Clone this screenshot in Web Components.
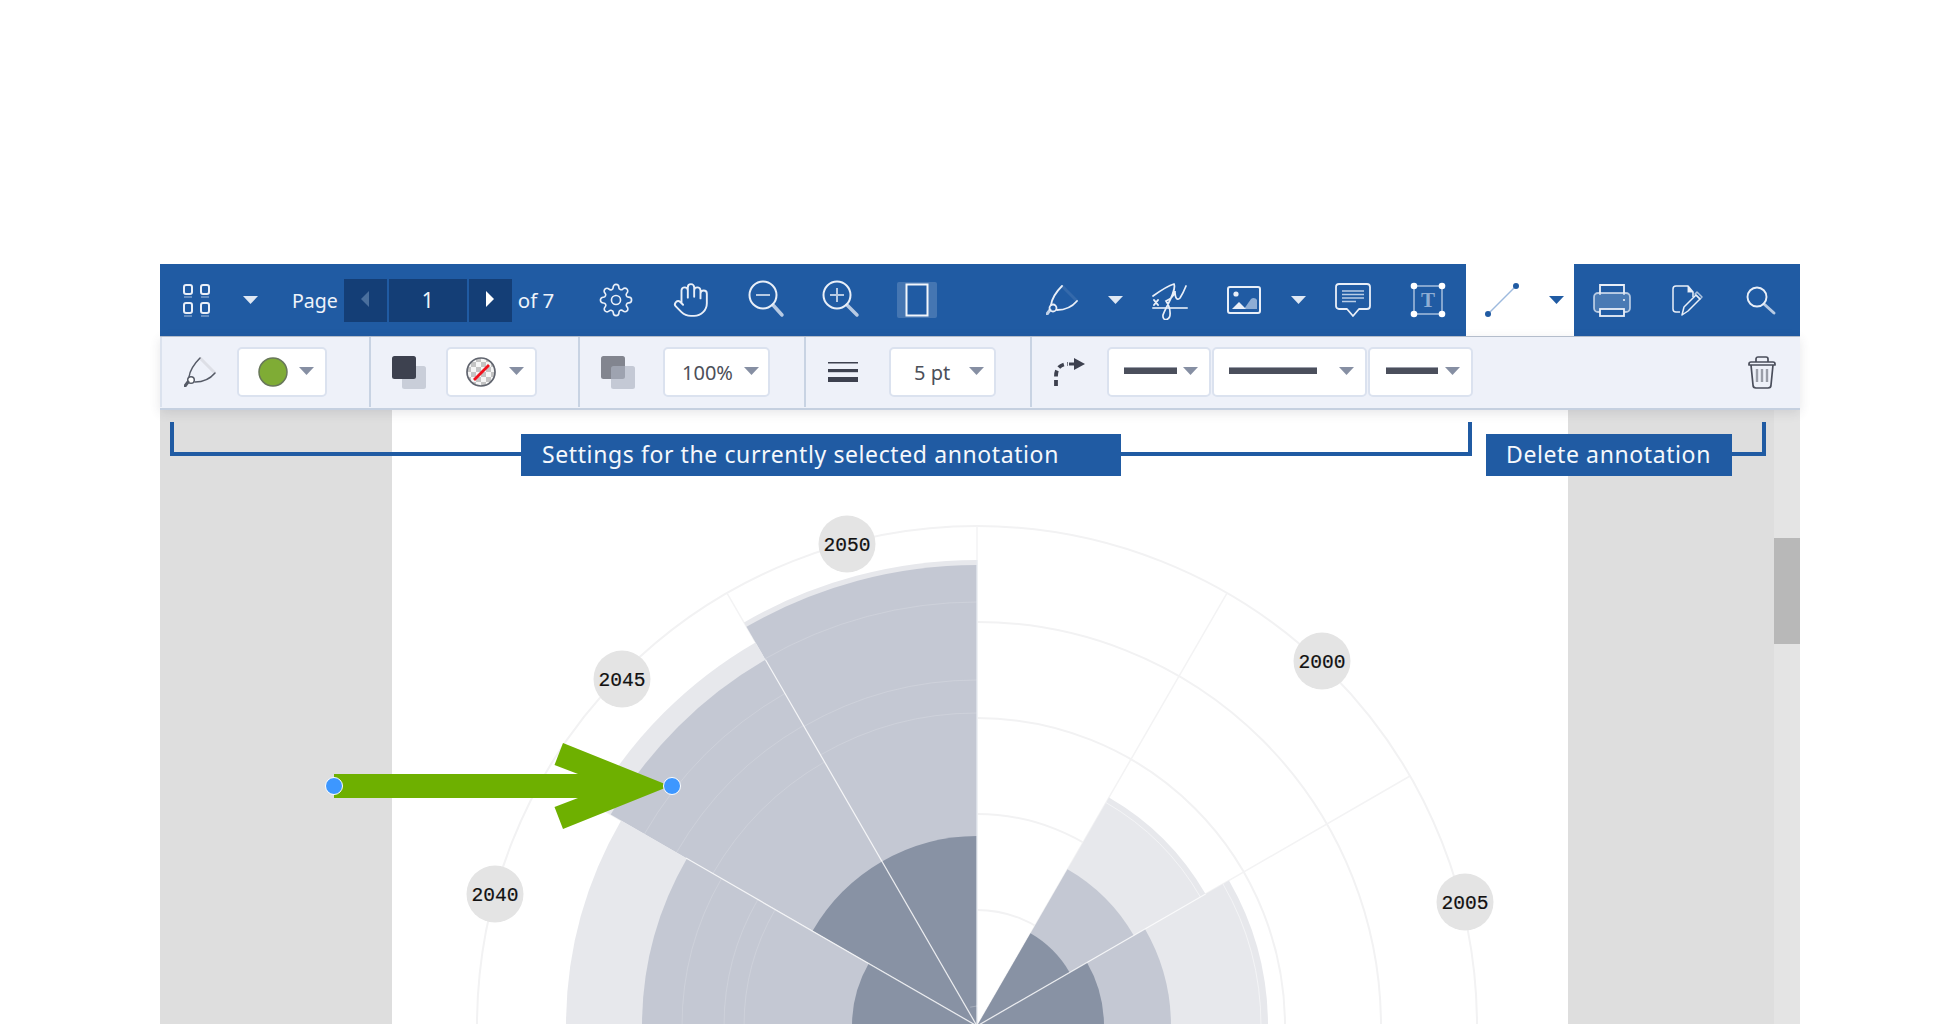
<!DOCTYPE html>
<html>
<head>
<meta charset="utf-8">
<title>Viewer annotation settings</title>
<style>
  html, body { margin: 0; height: 1024px; overflow: hidden; background: #fff; }
  body { font-family: "Noto Sans", sans-serif; }
</style>
</head>
<body>
<pdf-viewer></pdf-viewer>

<script>
const W = '#e9eff8';
const DARK = '#3d414f';

// inline svg for every toolbar icon, sized in real pixels
const ICONS = {
  caret: `<svg width="15" height="8" viewBox="0 0 15 8"><path d="M0 0h15L7.5 8z" fill="#dfe8f4"/></svg>`,
  caretdark: `<svg width="15" height="8" viewBox="0 0 15 8"><path d="M0 0h15L7.5 8z" fill="#868fa3"/></svg>`,
  caretblue: `<svg width="15" height="8" viewBox="0 0 15 8"><path d="M0 0h15L7.5 8z" fill="#205ba3"/></svg>`,
  grid: `<svg width="28" height="34" viewBox="0 0 28 34" fill="none" stroke="${W}" stroke-width="2">
    <rect x="2" y="2" width="8" height="9" rx="2"/><rect x="19" y="2" width="8" height="9" rx="2"/>
    <rect x="2" y="20" width="8" height="10" rx="2"/><rect x="19" y="20" width="8" height="10" rx="2"/>
    <path d="M2 14h8M19 14h8M2 33h8M19 33h8" stroke-opacity=".45" stroke-width="1.5"/></svg>`,
  gear: `<svg width="34" height="34" viewBox="0 0 24 24" fill="none" stroke="${W}" stroke-width="1.15" stroke-linejoin="round"><circle cx="12" cy="12" r="3.2"/><path d="M19.4 15a1.65 1.65 0 0 0 .33 1.82l.06.06a2 2 0 0 1 0 2.83 2 2 0 0 1-2.83 0l-.06-.06a1.65 1.65 0 0 0-1.82-.33 1.65 1.65 0 0 0-1 1.51V21a2 2 0 0 1-2 2 2 2 0 0 1-2-2v-.09A1.65 1.65 0 0 0 9 19.4a1.65 1.65 0 0 0-1.82.33l-.06.06a2 2 0 0 1-2.83 0 2 2 0 0 1 0-2.83l.06-.06a1.65 1.65 0 0 0 .33-1.82 1.65 1.65 0 0 0-1.51-1H3a2 2 0 0 1-2-2 2 2 0 0 1 2-2h.09A1.65 1.65 0 0 0 4.6 9a1.65 1.65 0 0 0-.33-1.82l-.06-.06a2 2 0 0 1 0-2.83 2 2 0 0 1 2.83 0l.06.06a1.65 1.65 0 0 0 1.82.33H9a1.65 1.65 0 0 0 1-1.51V3a2 2 0 0 1 2-2 2 2 0 0 1 2 2v.09a1.65 1.65 0 0 0 1 1.51 1.65 1.65 0 0 0 1.82-.33l.06-.06a2 2 0 0 1 2.83 0 2 2 0 0 1 0 2.83l-.06.06a1.65 1.65 0 0 0-.33 1.82V9a1.65 1.65 0 0 0 1.51 1H21a2 2 0 0 1 2 2 2 2 0 0 1-2 2h-.09a1.65 1.65 0 0 0-1.51 1z"/></svg>`,
  hand: `<svg width="38" height="38" viewBox="0 0 24 24" fill="none" stroke="${W}" stroke-width="1.2" stroke-linecap="round" stroke-linejoin="round"><path d="M18 11V6a2 2 0 0 0-2-2 2 2 0 0 0-2 2M14 10V4a2 2 0 0 0-2-2 2 2 0 0 0-2 2v2M10 10.5V6a2 2 0 0 0-2-2 2 2 0 0 0-2 2v8M18 8a2 2 0 1 1 4 0v6a8 8 0 0 1-8 8h-2c-2.800 0-4.500-.86-5.990-2.340l-3.600-3.600a2 2 0 0 1 2.830-2.820L7 15"/></svg>`,
  zoomout: `<svg width="40" height="40" viewBox="0 0 40 40" fill="none" stroke="${W}"><circle cx="17" cy="15" r="13.500" stroke-width="2"/><path d="M10 15h14" stroke-width="2" stroke-opacity=".75"/><path d="M27 25l9 10" stroke-width="3.500" stroke-linecap="round" stroke-opacity=".75"/></svg>`,
  zoomin: `<svg width="40" height="40" viewBox="0 0 40 40" fill="none" stroke="${W}"><circle cx="17" cy="15" r="13.500" stroke-width="2"/><path d="M10 15h14M17 8v14" stroke-width="2" stroke-opacity=".75"/><path d="M27 25l10 10" stroke-width="3.500" stroke-linecap="round" stroke-opacity=".75"/></svg>`,
  fit: `<svg width="40" height="36" viewBox="0 0 40 36"><rect width="40" height="36" rx="2" fill="#fff" fill-opacity=".17"/><rect x="9.500" y="2.500" width="21" height="31" fill="#205ba3" stroke="#f2f6fb" stroke-width="2"/></svg>`,
  ink: `<svg width="32" height="30" viewBox="0 0 32 30" fill="none"><path d="M16 1L31 16" stroke="#fff" stroke-opacity=".09" stroke-width="3"/><path d="M16 1C11 6 6 13 5 20M11 25C18 25 26 22 31 16" stroke="${W}" stroke-width="1.800" stroke-linecap="round"/><circle cx="7" cy="23" r="3.500" stroke="${W}" stroke-width="1.800"/><path d="M4 25l-3 4" stroke="${W}" stroke-width="3" stroke-linecap="round" stroke-opacity=".8"/></svg>`,
  inkdark: `<svg width="32" height="30" viewBox="0 0 32 30" fill="none"><path d="M16 1L31 16" stroke="#dddfe6" stroke-width="3"/><path d="M16 1C11 6 6 13 5 20M11 25C18 25 26 22 31 16" stroke="#555a66" stroke-width="1.500" stroke-linecap="round"/><circle cx="7" cy="23" r="3.300" fill="#fff" stroke="#555a66" stroke-width="1.500"/><path d="M4 25l-3 4" stroke="#555a66" stroke-width="3" stroke-linecap="round"/></svg>`,
  sign: `<svg width="36" height="40" viewBox="0 0 36 40" fill="none" stroke="${W}" stroke-linecap="round"><g transform="translate(1 3)"><path d="M0 13C7 8 14 3 21 1 24 8 12 25 10 32 9 39 18 38 17 29 17 24 15 21 13 18 17 16 21 14 22 8 22 15 24 18 27 15 29 12 31 8 33 3" stroke-width="1.700"/><path d="M0 25H34" stroke-width="2" stroke-opacity=".8"/><path d="M1 17l4 5M5 17l-4 5" stroke-width="2"/></g></svg>`,
  image: `<svg width="34" height="28" viewBox="0 0 34 28"><rect x="1" y="1" width="32" height="26" rx="2" fill="none" stroke="${W}" stroke-width="2"/><circle cx="9" cy="8" r="2.600" fill="${W}"/><path d="M17 23l7-10c2-2 5-1 6 1v9z" fill="#8eadd4"/><path d="M5 23l7-7 7 7z" fill="${W}"/></svg>`,
  comment: `<svg width="38" height="34" viewBox="0 0 38 34" fill="none"><path d="M5 1h28a3 3 0 0 1 3 3v19a3 3 0 0 1-3 3H25l-6 7-6-7H5a3 3 0 0 1-3-3V4a3 3 0 0 1 3-3z" stroke="${W}" stroke-width="1.800" stroke-linejoin="round"/><path d="M8 8h22M8 11.500h22M8 15h22M8 18.500h14" stroke="#b9cde6" stroke-width="1.300"/></svg>`,
  tbox: `<svg width="36" height="36" viewBox="0 0 36 36"><rect x="4" y="4" width="28" height="28" fill="none" stroke="#a5bedd" stroke-width="1.500"/><circle cx="4" cy="4" r="3.300" fill="#fff"/><circle cx="32" cy="4" r="3.300" fill="#fff"/><circle cx="4" cy="32" r="3.300" fill="#fff"/><circle cx="32" cy="32" r="3.300" fill="#fff"/><text x="18" y="25" text-anchor="middle" font-family="Liberation Serif, serif" font-weight="700" font-size="21" fill="#8eadd4">T</text></svg>`,
  line: `<svg width="36" height="36" viewBox="0 0 36 36"><path d="M4 32L32 4" stroke="#9dbade" stroke-width="1.500"/><circle cx="4" cy="32" r="3" fill="#205ba3"/><circle cx="32" cy="4" r="3" fill="#205ba3"/></svg>`,
  print: `<svg width="38" height="34" viewBox="0 0 38 34" fill="none" stroke="${W}" stroke-width="1.800"><path d="M7 12V2h24v10" /><rect x="1" y="10" width="36" height="19" rx="4" fill="#7d9fca" fill-opacity=".45" stroke-opacity=".7"/><rect x="7" y="26" width="24" height="7" fill="#205ba3"/><circle cx="31" cy="17" r="1.100" fill="${W}" stroke="none"/></svg>`,
  docedit: `<svg width="34" height="34" viewBox="0 0 34 34" fill="none" stroke="${W}" stroke-width="1.500" stroke-linejoin="round"><path d="M10 29H6a3 3 0 0 1-3-3V6a3 3 0 0 1 3-3h12l5 6v5"/><path d="M18 3v6h5" fill="${W}" stroke-opacity=".6"/><path d="M12 32l2-8 12-12 4 4-12 12z"/><path d="M27 9l5 5-2 2-5-5z" stroke-opacity=".7"/></svg>`,
  search: `<svg width="36" height="36" viewBox="0 0 36 36" fill="none" stroke="${W}"><circle cx="13" cy="15" r="9.500" stroke-width="1.900"/><path d="M20 22l10 9" stroke-width="3" stroke-linecap="round" stroke-opacity=".75"/></svg>`,
  paired: `<svg width="34" height="33" viewBox="0 0 34 33"><rect x="10" y="10" width="24" height="23" rx="2.500" fill="#c9ced9"/><rect width="24" height="23" rx="2.500" fill="${DARK}"/></svg>`,
  pairedfade: `<svg width="34" height="33" viewBox="0 0 34 33"><rect width="24" height="23" rx="2.500" fill="#82858f"/><rect x="10" y="10" width="24" height="23" rx="2.500" fill="#aeb3c1" fill-opacity=".65"/></svg>`,
  widths: `<svg width="30" height="20" viewBox="0 0 30 20" fill="${DARK}"><rect y="0" width="30" height="1.500"/><rect y="7" width="30" height="3.200"/><rect y="15" width="30" height="5"/></svg>`,
  connector: `<svg width="32" height="32" viewBox="0 0 32 32" fill="none" stroke="${DARK}" stroke-width="3.800"><path d="M3 30V20C3 12 8 8 15 8" stroke-dasharray="6 3.500"/><path d="M16 8h12" stroke-width="3"/><path d="M21 2l11 6-11 6z" fill="${DARK}" stroke="none"/></svg>`,
  trash: `<svg width="28" height="33" viewBox="0 0 28 33" fill="none" stroke="#4a4e5b" stroke-width="1.700" stroke-linejoin="round"><path d="M8 6V3a2 2 0 0 1 2-2h8a2 2 0 0 1 2 2v3"/><path d="M1 8a2 2 0 0 1 2-2h22a2 2 0 0 1 2 2v1H1z"/><path d="M3 9l2 20a3 3 0 0 0 3 3h12a3 3 0 0 0 3-3l2-20"/><path d="M9 13v13M14 13v13M19 13v13" stroke="#9a9ea8" stroke-width="2.400"/></svg>`,
  greendot: `<svg width="30" height="30" viewBox="0 0 30 30"><circle cx="15" cy="15" r="14" fill="#7fac35" stroke="#68775a" stroke-width="1.500"/></svg>`,
  nocolor: `<svg width="30" height="30" viewBox="0 0 30 30"><defs><pattern id="chk" width="10" height="10" patternUnits="userSpaceOnUse"><rect width="10" height="10" fill="#f6f6f6"/><rect width="5" height="5" fill="#c4c4c4"/><rect x="5" y="5" width="5" height="5" fill="#c4c4c4"/></pattern></defs><circle cx="15" cy="15" r="14" fill="url(#chk)" stroke="#60646e" stroke-width="1.700"/><path d="M8 23L23 8" stroke="#f0101c" stroke-width="2.800"/></svg>`
};

class ToolIcon extends HTMLElement {
  constructor() {
    super();
    this.attachShadow({ mode: 'open' });
    this.shadowRoot.innerHTML = `
      <style>
        :host { display: flex; flex: none; align-items: center; justify-content: center; width: var(--w, auto); height: 100%; }
        svg { display: block; }
      </style>` + ICONS[this.getAttribute('name')];
  }
}

const pagerTemplate = document.createElement('template');
pagerTemplate.innerHTML = `
  <style>
    :host { display: flex; flex: none; align-items: center; height: 100%; width: 311px; padding-left: 24px; box-sizing: border-box; color: #eef3fa; font-size: 19.500px; }
    .box { display: flex; height: 43px; margin: 0 6px 0 6px; gap: 2px; }
    .box div { display: flex; align-items: center; justify-content: center; background: #143e76; }
    .arrow { width: 43px; }
    .num { width: 78px; font-size: 21px; }
    .total { font-size: 20.500px; }
    svg { display: block; margin-top: -2px; }
  </style>
  <span>Page</span>
  <div class="box">
    <div class="arrow"><svg width="8" height="16"><path d="M8 0v16L0 8z" fill="#4a6f9d"/></svg></div>
    <div class="num">1</div>
    <div class="arrow"><svg width="8" height="16"><path d="M0 0v16l8-8z" fill="#fff"/></svg></div>
  </div>
  <span class="total">of 7</span>`;

class PagerBox extends HTMLElement {
  constructor() {
    super();
    this.attachShadow({ mode: 'open' });
    this.shadowRoot.appendChild(pagerTemplate.content.cloneNode(true));
  }
}

const mainbarTemplate = document.createElement('template');
mainbarTemplate.innerHTML = `
  <style>
    :host { display: flex; height: 72px; background: #205ba3; }
    .gap { flex: 1; }
    .sel { display: flex; height: 100%; background: #fff; }
  </style>
  <tool-icon name="grid" style="--w:72px"></tool-icon>
  <tool-icon name="caret" style="--w:36px"></tool-icon>
  <pager-box></pager-box>
  <tool-icon name="gear" style="--w:74px"></tool-icon>
  <tool-icon name="hand" style="--w:76px"></tool-icon>
  <tool-icon name="zoomout" style="--w:73px"></tool-icon>
  <tool-icon name="zoomin" style="--w:76px"></tool-icon>
  <tool-icon name="fit" style="--w:78px"></tool-icon>
  <div class="gap"></div>
  <tool-icon name="ink" style="--w:72px"></tool-icon>
  <tool-icon name="caret" style="--w:34px"></tool-icon>
  <tool-icon name="sign" style="--w:76px"></tool-icon>
  <tool-icon name="image" style="--w:72px"></tool-icon>
  <tool-icon name="caret" style="--w:36px"></tool-icon>
  <tool-icon name="comment" style="--w:74px"></tool-icon>
  <tool-icon name="tbox" style="--w:76px"></tool-icon>
  <div class="sel">
    <tool-icon name="line" style="--w:72px"></tool-icon>
    <tool-icon name="caretblue" style="--w:36px"></tool-icon>
  </div>
  <tool-icon name="print" style="--w:76px"></tool-icon>
  <tool-icon name="docedit" style="--w:74px"></tool-icon>
  <tool-icon name="search" style="--w:76px"></tool-icon>`;

class MainBar extends HTMLElement {
  constructor() {
    super();
    this.attachShadow({ mode: 'open' });
    this.shadowRoot.appendChild(mainbarTemplate.content.cloneNode(true));
  }
}

const selectTemplate = document.createElement('template');
selectTemplate.innerHTML = `
  <style>
    :host { display: flex; flex: none; align-items: center; box-sizing: border-box; height: 50px; width: var(--sw); padding: 0 var(--spr, 11px) 0 var(--spl, 14px);
      background: #fff; border: 2px solid #dbe2ef; border-radius: 5px; }
    tool-icon { margin-left: auto; margin-top: -2px; }
  </style>
  <slot></slot>
  <tool-icon name="caretdark"></tool-icon>`;

class DropSelect extends HTMLElement {
  constructor() {
    super();
    this.attachShadow({ mode: 'open' });
    this.shadowRoot.appendChild(selectTemplate.content.cloneNode(true));
  }
}

const groupTemplate = document.createElement('template');
groupTemplate.innerHTML = `
  <style>
    :host { display: flex; flex: none; align-items: center; box-sizing: border-box; height: 100%; width: var(--gw); padding-left: var(--gpl); gap: var(--gap, 22px); border-right: 2px solid #c8d3e3; }
    :host([last]) { flex: 1; border-right: none; gap: 0; padding-right: 24px; }
  </style>
  <slot></slot>`;

class AnnotGroup extends HTMLElement {
  constructor() {
    super();
    this.attachShadow({ mode: 'open' });
    this.shadowRoot.appendChild(groupTemplate.content.cloneNode(true));
  }
}

const annotbarTemplate = document.createElement('template');
annotbarTemplate.innerHTML = `
  <style>
    :host { display: flex; position: relative; z-index: 2; box-sizing: border-box; height: 74px; padding-bottom: 1px; margin-bottom: -1px; background: #eef1f9; border-bottom: 2px solid #c5d0e0; border-top: 1px solid #b4bdcb; box-shadow: 0 3px 10px rgba(60, 60, 70, .12); color: #4c4f59; font-size: 20px; }
    .dash { display: block; flex: none; height: 6px; margin-top: -3px; background: #4b4f5c; box-shadow: 0 -1px 0 #9a9eaa; }
    .trash { margin-left: auto; }
  </style>
  <annot-group style="--gw:211px;--gpl:22px;--gap:21px;border-left:2px solid #dbe2ee">
    <tool-icon name="inkdark"></tool-icon>
    <drop-select style="--sw:90px;--spl:18.500px"><tool-icon name="greendot"></tool-icon></drop-select>
  </annot-group>
  <annot-group style="--gw:209px;--gpl:21px;--gap:20px">
    <tool-icon name="paired"></tool-icon>
    <drop-select style="--sw:91px;--spl:18px"><tool-icon name="nocolor"></tool-icon></drop-select>
  </annot-group>
  <annot-group style="--gw:226px;--gpl:21px;--gap:28px">
    <tool-icon name="pairedfade"></tool-icon>
    <drop-select style="--sw:107px;--spl:17px;--spr:9px"><span>100%</span></drop-select>
  </annot-group>
  <annot-group style="--gw:226px;--gpl:22px;--gap:31px">
    <tool-icon name="widths"></tool-icon>
    <drop-select style="--sw:107px;--spl:23px;--spr:10px"><span>5 pt</span></drop-select>
  </annot-group>
  <annot-group last style="--gpl:21px">
    <tool-icon name="connector" style="margin-right:22px"></tool-icon>
    <drop-select style="--sw:104px;--spl:15px;margin-right:1px"><span class="dash" style="width:53px"></span></drop-select>
    <drop-select style="--sw:155px;--spl:15px;margin-right:1px"><span class="dash" style="width:88px"></span></drop-select>
    <drop-select style="--sw:105px;--spl:16px"><span class="dash" style="width:52px"></span></drop-select>
    <tool-icon class="trash" name="trash"></tool-icon>
  </annot-group>`;

class AnnotBar extends HTMLElement {
  constructor() {
    super();
    this.attachShadow({ mode: 'open' });
    this.shadowRoot.appendChild(annotbarTemplate.content.cloneNode(true));
  }
}

// the polar chart on the page, drawn in screen coordinates and shifted in the svg
class PolarChart extends HTMLElement {
  constructor() {
    super();
    this.attachShadow({ mode: 'open' });
    const cx = 977, cy = 1026;
    const pt = (r, a) => {
      const t = a * Math.PI / 180;
      return (cx + r * Math.sin(t)).toFixed(1) + ' ' + (cy - r * Math.cos(t)).toFixed(1);
    };
    const wedge = (a, b, r, fill) => `<path d="M${cx} ${cy}L${pt(r, a)}A${r} ${r} 0 0 1 ${pt(r, b)}Z" fill="${fill}"/>`;
    const arc = (a, b, r, st) => `<path d="M${pt(r, a)}A${r} ${r} 0 0 1 ${pt(r, b)}" fill="none" stroke="${st}"/>`;

    let out = '';
    [116, 212, 308, 404, 500].forEach(r => {
      out += `<circle cx="${cx}" cy="${cy}" r="${r}" fill="none" stroke="#f2f2f3" stroke-width="2"/>`;
    });
    [0, 30, 60, 330, 300].forEach(a => {
      out += `<path d="M${cx} ${cy}L${pt(500, a)}" stroke="#f3f3f4" stroke-width="1.500"/>`;
    });

    const sectors = [
      { a: 30, b: 60, r: [264, 181, 107], thin: [], lightThin: [258] },
      { a: 60, b: 90, r: [291, 194, 127], thin: [], lightThin: [284] },
      { a: 330, b: 360, r: [466, 461, 190], thin: [424, 346, 313] },
      { a: 300, b: 330, r: [443, 423, 190], thin: [384, 347, 305] },
      { a: 270, b: 300, r: [411, 335, 125], thin: [295, 253, 233] }
    ];
    sectors.forEach(s => {
      out += wedge(s.a, s.b, s.r[0], '#e7e8ec');
      out += wedge(s.a, s.b, s.r[1], '#c4c8d3');
      s.thin.forEach(r => { out += arc(s.a, s.b, r, 'rgba(255,255,255,.16)'); });
      (s.lightThin || []).forEach(r => { out += arc(s.a, s.b, r, 'rgba(255,255,255,.5)'); });
      out += wedge(s.a, s.b, s.r[2], '#8892a4');
    });
    // white seams between the sectors that touch
    out += `<path d="M${cx} ${cy}L${pt(423, 330)}M${cx} ${cy}L${pt(336, 300)}M${cx} ${cy}L${pt(264, 60)}" stroke="#fff" stroke-opacity=".75" stroke-width="1.300"/>`;
    out += `<path d="M${cx} ${cy}V560" stroke="#e9ecf2" stroke-width="1.300"/>`;
    out += arc(340, 380, 20, 'rgba(255,255,255,.25)');

    const labels = [[847, 545, '2050'], [622, 680, '2045'], [495, 895, '2040'], [1322, 662, '2000'], [1465, 903, '2005']];
    labels.forEach(([x, y, t]) => {
      out += `<circle cx="${x}" cy="${y - 1}" r="28.500" fill="#e4e4e4"/>`;
      out += `<text x="${x}" y="${y + 6}" text-anchor="middle">${t}</text>`;
    });

    this.shadowRoot.innerHTML = `
      <style>
        :host { display: block; width: 100%; height: 100%; }
        svg { display: block; }
        text { font-family: "Liberation Mono", monospace; font-size: 19.600px; fill: #111; stroke: #111; stroke-width: .2px; }
      </style>
      <svg width="1176" height="615" viewBox="392 409 1176 615">${out}</svg>`;
  }
}

const calloutTemplate = document.createElement('template');
calloutTemplate.innerHTML = `
  <style>
    :host { position: absolute; display: flex; align-items: center; box-sizing: border-box; height: 42px; padding: 0 0 3px 21px; background: #205ba3; color: #f5f8fc; font-size: 23px; letter-spacing: .6px; white-space: nowrap; }
  </style>
  <slot></slot>`;

class CallOut extends HTMLElement {
  constructor() {
    super();
    this.attachShadow({ mode: 'open' });
    this.shadowRoot.appendChild(calloutTemplate.content.cloneNode(true));
  }
}

const canvasTemplate = document.createElement('template');
canvasTemplate.innerHTML = `
  <style>
    :host { display: flex; position: relative; height: 615px; overflow: hidden; background: #dedede; }
    .gutter-l { flex: none; width: 232px; }
    .page { flex: none; width: 1176px; background: #fff; }
    .gutter-r { flex: none; width: 206px; }
    .scroll { flex: none; width: 26px; background: #e4e4e4; position: relative; }
    .thumb { position: absolute; left: 0; right: 0; top: 129px; height: 106px; background: #b8b8b8; }
    .bracket { position: absolute; box-sizing: border-box; top: 13px; height: 34px; border-bottom: 4px solid #205ba3; }
    .arrow { position: absolute; left: 0; top: 0; }
  </style>
  <div class="gutter-l"></div>
  <div class="page"><polar-chart></polar-chart></div>
  <div class="gutter-r"></div>
  <div class="scroll"><div class="thumb"></div></div>

  <div class="bracket" style="left:10px;width:352px;border-left:4px solid #205ba3"></div>
  <div class="bracket" style="left:960px;width:352px;border-right:4px solid #205ba3"></div>
  <div class="bracket" style="left:1571px;width:35px;border-right:4px solid #205ba3"></div>
  <call-out style="left:361px;top:25px;width:600px">Settings for the currently selected annotation</call-out>
  <call-out style="left:1326px;top:25px;width:246px;padding-left:20px">Delete annotation</call-out>

  <svg class="arrow" width="1640" height="615" viewBox="160 409 1640 615">
    <path d="M334 774H578L554.500 765 563 743 670 786 563 829 554.500 807 578 798H334Z" fill="#6eb000"/>
    <circle cx="334" cy="786" r="8.500" fill="#3d97ff" stroke="#fff"/>
    <circle cx="672" cy="786" r="8.500" fill="#3d97ff" stroke="#fff"/>
  </svg>`;

class DocCanvas extends HTMLElement {
  constructor() {
    super();
    this.attachShadow({ mode: 'open' });
    this.shadowRoot.appendChild(canvasTemplate.content.cloneNode(true));
  }
}

const viewerTemplate = document.createElement('template');
viewerTemplate.innerHTML = `
  <style>
    :host { display: block; box-sizing: border-box; width: 1960px; height: 1024px; padding: 264px 160px 0; overflow: hidden; font-family: "Noto Sans", sans-serif; }
  </style>
  <main-bar></main-bar>
  <annot-bar></annot-bar>
  <doc-canvas></doc-canvas>`;

class PdfViewer extends HTMLElement {
  constructor() {
    super();
    this.attachShadow({ mode: 'open' });
    this.shadowRoot.appendChild(viewerTemplate.content.cloneNode(true));
  }
}

customElements.define('tool-icon', ToolIcon);
customElements.define('pager-box', PagerBox);
customElements.define('main-bar', MainBar);
customElements.define('drop-select', DropSelect);
customElements.define('annot-group', AnnotGroup);
customElements.define('annot-bar', AnnotBar);
customElements.define('polar-chart', PolarChart);
customElements.define('call-out', CallOut);
customElements.define('doc-canvas', DocCanvas);
customElements.define('pdf-viewer', PdfViewer);
</script>
</body>
</html>
